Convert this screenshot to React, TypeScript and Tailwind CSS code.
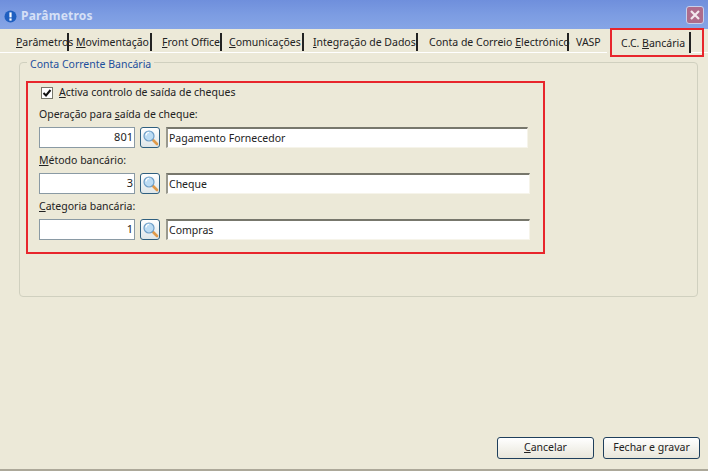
const font = { fontFamily: '"Noto Sans", Tahoma, sans-serif' }

function Magnifier() {
  return (
    <button className="flex h-[21px] w-[20px] items-center justify-center rounded-[3px] border border-[#2f5f7f] bg-gradient-to-b from-white to-[#dfe6e8]">
      <svg width="17" height="17" viewBox="0 0 17 17">
        <line x1="10" y1="10" x2="15" y2="15" stroke="#e09a4a" strokeWidth="2.6" strokeLinecap="round" />
        <circle cx="7" cy="7" r="5" fill="#bcdcf4" stroke="#6f9fc8" strokeWidth="1.2" />
        <path d="M4 6.5a3 3 0 0 1 3-3" stroke="#ffffff" strokeWidth="1.2" fill="none" />
      </svg>
    </button>
  )
}

function Field({ mnemonic, rest, code, text, before, width }: { mnemonic: string; rest: string; code: string; text: string; before?: string; width: string }) {
  return (
    <div>
      <div className="h-[16px] whitespace-nowrap pl-[13px] text-[10.5px] leading-[16px] text-[#222]">
        {before}<span className="underline">{mnemonic}</span>{rest}
      </div>
      <div className="mt-[5px] flex h-[21px] items-center">
        <div className="ml-[13px] h-[21px] w-[96px] border border-[#8a9aa4] bg-white pr-[1px] text-right text-[11px] leading-[18px] text-[#222]">{code}</div>
        <div className="ml-[5px]"><Magnifier /></div>
        <div className={`ml-[6px] h-[21px] whitespace-nowrap border-t-2 border-l-2 border-t-[#77776c] border-l-[#99998e] border-b border-r border-b-[#f6f4ea] border-r-[#f6f4ea] bg-white pl-[1px] text-[10.5px] leading-[18px] text-[#222] ${width}`}>{text}</div>
      </div>
    </div>
  )
}

const tabs = [
  { pre: "", key: "P", post: "arâmetros", cls: "w-[64px] pl-[11px]" },
  { pre: "", key: "M", post: "ovimentação", cls: "w-[83px] pl-[7px]" },
  { pre: "", key: "F", post: "ront Office", cls: "w-[70px] pl-[10px]" },
  { pre: "", key: "C", post: "omunicações", cls: "w-[82px] pl-[7px]" },
  { pre: "", key: "I", post: "ntegração de Dados", cls: "w-[114px] pl-[9px]" },
  { pre: "Conta de Correio ", key: "E", post: "lectrónico", cls: "w-[151px] pl-[11px]" },
]

export default function App() {
  return (
    <div className="relative flex h-[471px] w-[708px] flex-col overflow-hidden bg-[#ece9d8]" style={font}>
      {/* title bar */}
      <div className="flex h-[29px] items-center bg-gradient-to-b from-[#6f8fdc] via-[#7c9ce2] to-[#86a5e6] pl-[4px] pr-[4px] pt-[3px]">
        <svg width="13" height="13" viewBox="0 0 13 13">
          <circle cx="6.5" cy="6.5" r="6" fill="#1f5fc0" />
          <rect x="5.4" y="2.4" width="2.2" height="5" fill="#fff" />
          <rect x="5.4" y="8.4" width="2.2" height="2.2" fill="#fff" />
        </svg>
        <span className="ml-[4px] text-[12px] font-bold tracking-[0.2px] text-[#d6e0f6]">Parâmetros</span>
        <div className="ml-auto mb-[3px] flex h-[18px] w-[18px] items-center justify-center rounded-[3px] border border-[#c8d0ea] bg-[#ae6c8c]">
          <svg width="12" height="12" viewBox="0 0 12 12">
            <path d="M2 2l8 8M10 2l-8 8" stroke="#f4e8ee" strokeWidth="2.2" />
          </svg>
        </div>
      </div>

      {/* tabs */}
      <div className="flex h-[24px] items-end whitespace-nowrap border-b border-b-white pl-[5px] text-[10.5px] text-[#222]">
        {tabs.map((t) => (
          <div key={t.key} className={`mb-[1px] h-[18px] shrink-0 border-r-2 border-r-[#222] leading-[18px] ${t.cls}`}>
            {t.pre}<span className="underline">{t.key}</span>{t.post}
          </div>
        ))}
        <div className="mb-[1px] h-[18px] w-[38px] shrink-0 pl-[7px] leading-[18px]">VASP</div>
        <div className="mb-[-1px] h-[21px] w-[84px] shrink-0 border-r-2 border-r-[#222] bg-[#ece9d8] pl-[14px] pt-[2px] leading-[18px]">
          C.C. <span className="underline">B</span>ancária
        </div>
      </div>

      {/* group box */}
      <div className="relative ml-[19px] mr-[10px] mt-[9px] h-[235px] rounded-[4px] border border-[#d0d0bf]">
        <div className="absolute left-[7px] top-[-6px] whitespace-nowrap bg-[#ece9d8] px-[3px] text-[10.5px] leading-[14px] text-[#1d4f9c]">Conta Corrente Bancária</div>
        <div className="pt-[23px]">
          <div className="flex h-[13px] items-center pl-[21px]">
            <div className="flex h-[12px] w-[12px] items-center justify-center border border-[#77776c] bg-white">
              <svg width="10" height="10" viewBox="0 0 10 10">
                <path d="M1.5 5l2.5 2.5 4.5-5.5" stroke="#111" strokeWidth="2" fill="none" />
              </svg>
            </div>
            <span className="ml-[6px] whitespace-nowrap text-[10.5px] text-[#222]"><span className="underline">A</span>ctiva controlo de saída de cheques</span>
          </div>
          <div className="mt-[7px] flex flex-col gap-[4px] pl-[6px]">
            <Field before="Operação para " mnemonic="s" rest="aída de cheque:" code="801" text="Pagamento Fornecedor" width="w-[362px]" />
            <Field mnemonic="M" rest="étodo bancário:" code="3" text="Cheque" width="w-[364px]" />
            <Field mnemonic="C" rest="ategoria bancária:" code="1" text="Compras" width="w-[364px]" />
          </div>
        </div>
      </div>

      {/* footer buttons */}
      <div className="mt-auto flex justify-end gap-[9px] border-b-2 border-b-[#aca899] pb-[10px] pr-[8px] text-[10.5px] text-[#222]">
        <button className="h-[22px] w-[97px] rounded-[3px] border border-[#1f3f5c] bg-gradient-to-b from-white to-[#e8e6da]"><span className="underline">C</span>ancelar</button>
        <button className="h-[22px] w-[97px] rounded-[3px] border border-[#1f3f5c] bg-gradient-to-b from-white to-[#e8e6da]">Fechar e gravar</button>
      </div>

      {/* red annotations */}
      <div className="pointer-events-none absolute left-[26px] top-[81px] h-[173px] w-[519px] border-2 border-[#e8262c]" />
      <div className="pointer-events-none absolute left-[610px] top-[28px] h-[29px] w-[94px] border-2 border-[#e8262c]" />
    </div>
  )
}
